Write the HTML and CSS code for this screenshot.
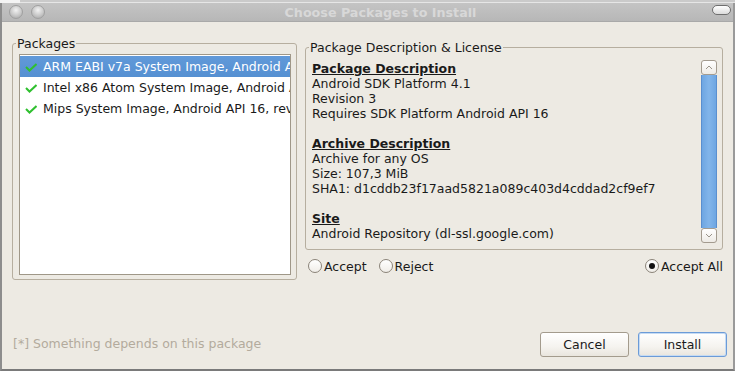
FILE: index.html
```html
<!DOCTYPE html>
<html lang="en">
	<head>
		<meta charset="UTF-8" />
		<title>Choose Packages to Install</title>
		<link rel="stylesheet" href="styles.css">
	</head>
	<body>
		<div class="backdrop-top"><span class="backdrop-gap"></span><span class="backdrop-bar"></span></div>
		<div class="screen">
			<div class="window">
				<div class="titlebar">
					<span class="tb-btn"></span>
					<span class="tb-btn"></span>
					<span class="title">Choose Packages to Install</span>
					<span class="tb-pill"></span>
				</div>

				<div class="window-body">
					<div class="panes">
						<fieldset class="group packages">
							<legend>Packages</legend>
							<ul class="pkg-list">
								<li class="selected">
									<svg class="check" width="12" height="9" viewBox="0 0 12 9"><polyline points="1,4 4.5,7.5 11.5,1" fill="none" stroke="#2fc02f" stroke-width="2"/></svg>
									<span>ARM EABI v7a System Image, Android API 16</span>
								</li>
								<li>
									<svg class="check" width="12" height="9" viewBox="0 0 12 9"><polyline points="1,4 4.5,7.5 11.5,1" fill="none" stroke="#2fc02f" stroke-width="2"/></svg>
									<span>Intel x86 Atom System Image, Android API 16</span>
								</li>
								<li>
									<svg class="check" width="12" height="9" viewBox="0 0 12 9"><polyline points="1,4 4.5,7.5 11.5,1" fill="none" stroke="#2fc02f" stroke-width="2"/></svg>
									<span>Mips System Image, Android API 16, revision 1</span>
								</li>
							</ul>
						</fieldset>

						<div class="right-col">
							<fieldset class="group desc">
								<legend>Package Description &amp; License</legend>
								<div class="desc-inner">
									<div class="desc-text">
										<div class="heading">Package Description</div>
										<div>Android SDK Platform 4.1</div>
										<div>Revision 3</div>
										<div>Requires SDK Platform Android API 16</div>
										<div class="blank"></div>
										<div class="heading">Archive Description</div>
										<div>Archive for any OS</div>
										<div>Size: 107,3 MiB</div>
										<div>SHA1: d1cddb23f17aad5821a089c403d4cddad2cf9ef7</div>
										<div class="blank"></div>
										<div class="heading">Site</div>
										<div>Android Repository (dl-ssl.google.com)</div>
									</div>
									<div class="scrollbar">
										<div class="sb-arrow">
											<svg width="8" height="5" viewBox="0 0 8 5"><polyline points="1,4 4,1 7,4" fill="none" stroke="#9a948a" stroke-width="1"/></svg>
										</div>
										<div class="sb-thumb"></div>
										<div class="sb-arrow">
											<svg width="8" height="5" viewBox="0 0 8 5"><polyline points="1,1 4,4 7,1" fill="none" stroke="#9a948a" stroke-width="1"/></svg>
										</div>
									</div>
								</div>
							</fieldset>

							<div class="radios">
								<label class="radio"><span class="radio-dot"></span>Accept</label>
								<label class="radio"><span class="radio-dot"></span>Reject</label>
								<label class="radio accept-all"><span class="radio-dot checked"></span>Accept All</label>
							</div>
						</div>
					</div>

					<div class="footer">
						<span class="footnote">[*] Something depends on this package</span>
						<div class="buttons">
							<button class="btn">Cancel</button>
							<button class="btn default">Install</button>
						</div>
					</div>
				</div>
			</div>
		</div>
	</body>
</html>
```

FILE: styles.css
```css
:root {
	--window-bg: #edeae3;
	--frame: #b6ae9f;
	--list-border: #9f9788;
	--select: #5b94d5;
	--text: #1a1a1a;
	--muted: #b3ab9d;
}

* {
	margin: 0;
	padding: 0;
	box-sizing: border-box;
}

body {
	font-family: "DejaVu Sans", "Liberation Sans", sans-serif;
	font-size: 12.5px;
	line-height: 15px;
	color: var(--text);
	background: #ffffff;
	width: 742px;
	height: 374px;
	overflow: hidden;
}

/* window behind the dialog */
.backdrop-top {
	display: flex;
	height: 3px;
}

.backdrop-gap {
	width: 20px;
	background: #f4f4f4;
}

.backdrop-bar {
	width: 715px;
	background: #cacaca;
	border-bottom: 1px solid #e6e6e6;
}

.screen {
	display: flex;
	background: #ffffff;
}

.window {
	width: 735px;
	height: 368px;
	display: flex;
	flex-direction: column;
	background: var(--window-bg);
	border-left: 2px solid #8d8d8d;
	border-right: 2px solid #9a9a9a;
	border-bottom: 2px solid #7a7a7a;
}

/* title bar */
.titlebar {
	height: 19px;
	display: flex;
	align-items: center;
	gap: 8px;
	padding: 0 2px 0 7px;
	background: linear-gradient(#c4c4c4, #b7b7b7);
	border-bottom: 1px solid #a9a9a9;
}

.tb-btn {
	width: 14px;
	height: 14px;
	border-radius: 50%;
	background: radial-gradient(circle at 50% 35%, #f2f2f2 0%, #c8c8c8 55%, #a3a3a3 100%);
	border: 1px solid #a0a0a0;
	flex: none;
}

.title {
	flex: 1;
	text-align: center;
	font-size: 12.7px;
	font-weight: bold;
	color: #d8d8d8;
	padding-left: 4px;
}

.tb-pill {
	width: 19px;
	height: 10px;
	border-radius: 5px;
	border: 1px solid #6f6f6f;
	background: linear-gradient(#ffffff, #dcdcdc);
	flex: none;
	margin-top: -4px;
}

.window-body {
	flex: 1;
	display: flex;
	flex-direction: column;
	padding: 14px 9px 12px 10px;
}

.panes {
	display: flex;
	gap: 8px;
	align-items: flex-start;
}

/* group boxes */
.group {
	min-width: 0;
	border: 1px solid var(--frame);
	border-radius: 3px;
}

.group legend {
	padding: 0 1px;
	margin-left: -3px;
	line-height: 15px;
}

.packages {
	width: 285px;
	flex: none;
	padding: 3px 5px 4px 6px;
}

.pkg-list {
	list-style: none;
	height: 221px;
	background: #ffffff;
	border: 1px solid var(--list-border);
	padding: 1px 0 0 0;
	overflow: hidden;
}

.pkg-list li {
	height: 21px;
	display: flex;
	align-items: center;
	gap: 6px;
	padding-left: 5px;
	white-space: nowrap;
	overflow: hidden;
}

.pkg-list li.selected {
	background: linear-gradient(#6199d9, #5590d2);
	color: #ffffff;
}

.check {
	flex: none;
	margin-top: 1px;
}

.right-col {
	width: 418px;
	flex: none;
	margin-top: 4px;
	display: flex;
	flex-direction: column;
}

.desc {
	padding: 5px 5px 6px 6px;
}

.desc-inner {
	height: 183px;
	display: flex;
	justify-content: space-between;
}

.desc-text {
	white-space: nowrap;
	margin-top: 1px;
}

.heading {
	font-weight: bold;
	text-decoration: underline;
}

.blank {
	height: 15px;
}

/* scrollbar */
.scrollbar {
	width: 16px;
	flex: none;
	display: flex;
	flex-direction: column;
}

.sb-arrow {
	height: 15px;
	display: flex;
	align-items: center;
	justify-content: center;
	background: linear-gradient(#ffffff, #eeebe6);
	border: 1px solid #a39b8f;
	border-radius: 3px;
}

.sb-thumb {
	flex: 1;
	background: linear-gradient(90deg, #6ea6e2, #82b5ea 50%, #6ea6e2);
	border: 1px solid #5a8fcf;
	border-top: none;
	border-bottom: none;
}

/* radio row */
.radios {
	display: flex;
	align-items: center;
	gap: 12px;
	margin-top: 8px;
	padding-left: 3px;
	height: 16px;
}

.radio {
	display: flex;
	align-items: center;
	gap: 2px;
}

.accept-all {
	margin-left: auto;
}

.radio-dot {
	width: 14px;
	height: 14px;
	border-radius: 50%;
	border: 1px solid #8a8378;
	background: linear-gradient(#ffffff, #f0ede8);
	display: flex;
	align-items: center;
	justify-content: center;
}

.radio-dot.checked::after {
	content: "";
	width: 6px;
	height: 6px;
	border-radius: 50%;
	background: #111111;
}

/* footer */
.footer {
	margin-top: auto;
	display: flex;
	align-items: center;
	justify-content: space-between;
}

.footnote {
	color: var(--muted);
	padding-left: 1px;
	margin-top: -2px;
}

.buttons {
	display: flex;
	gap: 9px;
	margin-right: -3px;
}

.btn {
	width: 89px;
	height: 25px;
	font-family: inherit;
	font-size: 12.5px;
	color: var(--text);
	border: 1px solid #a39b8d;
	border-radius: 3px;
	background: linear-gradient(#ffffff, #f5f3ef 60%, #e9e5de);
}

.btn.default {
	border-color: #6b9bd8;
	box-shadow: inset 0 0 0 1px #c6dbf3;
}
```
